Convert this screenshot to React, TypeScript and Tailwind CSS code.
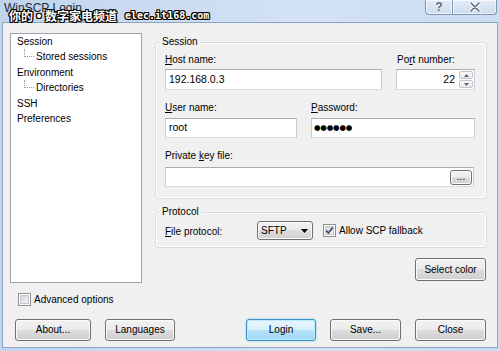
import React from "react";

const F = "font-['Liberation_Sans',Arial,sans-serif]";

const btn =
  "flex items-center justify-center rounded-[3px] border border-[#707070] bg-[linear-gradient(#f2f2f2_0%,#ebebeb_49%,#dddddd_50%,#cfcfcf_100%)] shadow-[inset_0_0_0_1px_#fbfbfb] text-[10px] leading-[12px] text-black";

const input =
  "border border-[#abadb3] border-l-[#c9cbd1] border-r-[#c9cbd1] border-b-[#d7dbe0] bg-white";

function U({ children }: { children: React.ReactNode }) {
  return <span className="underline underline-offset-[1px]">{children}</span>;
}

function Group({
  label,
  className,
  children,
}: {
  label: string;
  className?: string;
  children: React.ReactNode;
}) {
  return (
    <div
      className={
        "relative rounded-[3px] border border-[#d5dfe5] shadow-[inset_0_0_0_1px_#ffffff] " +
        (className ?? "")
      }
    >
      <span className="absolute -top-[7px] left-[4px] bg-[#f0f0f0] px-[2px] leading-[12px]">
        {label}
      </span>
      {children}
    </div>
  );
}

function Check({ checked }: { checked?: boolean }) {
  return (
    <span className="flex h-[13px] w-[13px] shrink-0 items-center justify-center border border-[#8e8f8f] bg-white">
      <span className="flex h-[9px] w-[9px] items-center justify-center border border-[#c4c7cc] bg-[linear-gradient(135deg,#d2d5d9,#f4f4f4)]">
        {checked && (
          <svg width="9" height="9" viewBox="0 0 9 9" className="overflow-visible">
            <path
              d="M1.2 4.6 L3.4 7 L7.8 1.4"
              fill="none"
              stroke="#3a4f7a"
              strokeWidth="1.7"
              strokeLinejoin="round"
            />
          </svg>
        )}
      </span>
    </span>
  );
}

function TreeChild({ label }: { label: string }) {
  return (
    <div className="flex h-[15.4px]">
      <span className="ml-[7px] h-[8px] w-[10px] border-b border-l border-dotted border-[#9a9a9a]" />
      <span className="ml-[2px]">{label}</span>
    </div>
  );
}

const outline =
  "[text-shadow:1px_0_0_#000,-1px_0_0_#000,0_1px_0_#000,0_-1px_0_#000,1px_1px_0_#000,-1px_-1px_0_#000,1px_-1px_0_#000,-1px_1px_0_#000]";

export default function App() {
  return (
    <div
      className={`${F} relative h-[351px] w-[500px] overflow-hidden bg-[linear-gradient(90deg,#c0d5ed,#d3e2f4_60%,#cbdcf0)] text-[10px] text-black`}
    >
      {/* Title bar */}
      <div className="flex h-[22px] items-start justify-between">
        <span className="pl-[4px] pt-[1px] text-[12px] leading-[14px] text-[#1e2a3a]">
          WinSCP Login
        </span>
        <div className="mr-[3px] flex h-[15px]">
          <div className="flex w-[27px] items-center justify-center rounded-bl-[4px] border border-t-0 border-r-0 border-[#8196b4] bg-[linear-gradient(#e4edf8,#cddcee)] shadow-[inset_0_0_0_1px_rgba(255,255,255,0.6)]">
            <span className="text-[12px] font-bold leading-[12px] text-[#55657a] [text-shadow:0_0_1px_#fff,0_0_1px_#fff]">
              ?
            </span>
          </div>
          <div className="flex w-[45px] items-center justify-center rounded-br-[4px] border border-t-0 border-[#8196b4] bg-[linear-gradient(#e4edf8,#cddcee)] shadow-[inset_0_0_0_1px_rgba(255,255,255,0.6)]">
            <svg width="12" height="10" viewBox="0 0 12 10">
              <path d="M2 1 L10 9 M10 1 L2 9" stroke="#ffffff" strokeWidth="3.4" strokeLinecap="round" />
              <path d="M2 1 L10 9 M10 1 L2 9" stroke="#5c6b80" strokeWidth="1.6" strokeLinecap="round" />
            </svg>
          </div>
        </div>
      </div>

      {/* Watermark overlay */}
      <div className={`absolute left-[9px] top-[9px] flex items-center whitespace-nowrap text-white ${outline}`}>
        <span className="inline-block w-[24px] overflow-visible font-['Noto_Sans_CJK_SC',sans-serif] text-[12px] font-bold leading-[14px]">
          你的
        </span>
        <span className="inline-block w-[12px] text-center font-['Liberation_Sans',sans-serif] text-[14px] font-bold leading-[14px]">
          •
        </span>
        <span className="inline-block w-[80px] font-['Noto_Sans_CJK_SC',sans-serif] text-[12px] font-bold leading-[14px]">
          数字家电频道
        </span>
        <span className="inline-block font-['DejaVu_Sans_Mono',monospace] text-[10px] font-bold leading-[14px]">
          elec.it168.com
        </span>
      </div>

      {/* Client area */}
      <div className="ml-[2px] flex h-[326px] w-[496px] flex-col border border-[#8ea3bf] bg-[#f0f0f0]">
        <div className="flex pl-[7px] pt-[10px]">
          {/* Left column */}
          <div className="flex w-[132px] flex-col">
            <div className="h-[250px] border border-[#9ea2aa] bg-white pl-[6px] leading-[15.4px]">
              <div>Session</div>
              <TreeChild label="Stored sessions" />
              <div>Environment</div>
              <TreeChild label="Directories" />
              <div>SSH</div>
              <div>Preferences</div>
            </div>
            <div className="ml-[8px] mt-[10px] flex items-center gap-[3px] leading-[12px]">
              <Check />
              <span>Advanced options</span>
            </div>
          </div>

          {/* Right column */}
          <div className="ml-[13px] mt-[9px] flex w-[332px] flex-col">
            <Group label="Session" className="pb-[11px] pl-[9px] pt-[11px]">
              <div className="flex gap-[14px]">
                <div className="w-[217px]">
                  <div className="mb-[3px] leading-[12px]">
                    <U>H</U>ost name:
                  </div>
                  <div className={`${input} flex h-[21px] items-center pl-[3px] text-[10.5px]`}>
                    192.168.0.3
                  </div>
                </div>
                <div className="w-[79px]">
                  <div className="mb-[3px] pl-[1px] leading-[12px]">
                    Po<U>r</U>t number:
                  </div>
                  <div className={`${input} flex h-[21px] items-center justify-end pr-[1px] text-[10.5px]`}>
                    <span className="mr-[4px]">22</span>
                    <div className="flex h-[17px] w-[14px] flex-col gap-[1px]">
                      <div className="flex flex-1 items-center justify-center rounded-[2px] border border-[#c2c5ca] bg-[linear-gradient(#fafafa,#e8e8e8)]">
                        <svg width="5" height="3" viewBox="0 0 5 3">
                          <path d="M0 3 L2.5 0 L5 3 Z" fill="#5d6673" />
                        </svg>
                      </div>
                      <div className="flex flex-1 items-center justify-center rounded-[2px] border border-[#c2c5ca] bg-[linear-gradient(#fafafa,#e8e8e8)]">
                        <svg width="5" height="3" viewBox="0 0 5 3">
                          <path d="M0 0 L5 0 L2.5 3 Z" fill="#5d6673" />
                        </svg>
                      </div>
                    </div>
                  </div>
                </div>
              </div>

              <div className="mt-[12px] flex gap-[14px]">
                <div className="w-[132px]">
                  <div className="mb-[4px] leading-[12px]">
                    <U>U</U>ser name:
                  </div>
                  <div className={`${input} flex h-[20px] items-center pl-[3px] text-[10.5px]`}>
                    root
                  </div>
                </div>
                <div className="w-[164px]">
                  <div className="mb-[4px] leading-[12px]">
                    <U>P</U>assword:
                  </div>
                  <div className={`${input} flex h-[20px] items-center pl-[2px]`}>
                    <span className="font-['DejaVu_Sans',sans-serif] text-[7.5px] leading-[10px] tracking-[-0.2px]">
                      ●●●●●●
                    </span>
                  </div>
                </div>
              </div>

              <div className="mt-[12px] w-[309px]">
                <div className="mb-[5px] leading-[12px]">
                  Private <U>k</U>ey file:
                </div>
                <div className={`${input} flex h-[20px] items-center justify-end pr-[1px]`}>
                  <div className={`${btn} h-[15px] w-[22px] !leading-[8px]`}>...</div>
                </div>
              </div>
            </Group>

            <Group label="Protocol" className="mt-[13px] pb-[7px] pl-[9px] pt-[8px]">
              <div className="flex h-[19px] items-center">
                <span className="w-[92px] pt-[2px] leading-[12px]">
                  <U>F</U>ile protocol:
                </span>
                <div className={`${btn} h-[19px] w-[56px] !justify-between pl-[3px] pr-[4px]`}>
                  <span>SFTP</span>
                  <svg width="7" height="4" viewBox="0 0 7 4">
                    <path d="M0 0 L7 0 L3.5 4 Z" fill="#000" />
                  </svg>
                </div>
                <span className="ml-[10px]">
                  <Check checked />
                </span>
                <span className="ml-[3px] leading-[12px]">Allow SCP fallback</span>
              </div>
            </Group>

            <div className="mr-[1px] mt-[10px] flex justify-end">
              <div className={`${btn} h-[23px] w-[71px]`}>Select color</div>
            </div>
          </div>
        </div>

        {/* Bottom buttons */}
        <div className="mt-auto flex pb-[6px] pl-[12px] pr-[11px]">
          <div className={`${btn} h-[22px] w-[76px]`}>About...</div>
          <div className={`${btn} ml-[14px] h-[22px] w-[70px]`}>Languages</div>
          <div className="ml-auto flex gap-[14px]">
            <div className="flex h-[22px] w-[70px] items-center justify-center rounded-[3px] border border-[#3c8fc4] bg-[linear-gradient(#eaf7fe_0%,#d5effc_49%,#b8e3fa_50%,#a0d6f3_100%)] shadow-[inset_0_0_0_1px_#b8ecff,0_0_2px_#5fcdf6] leading-[12px]">
              Login
            </div>
            <div className={`${btn} h-[22px] w-[71px]`}>Save...</div>
            <div className={`${btn} h-[22px] w-[71px]`}>Close</div>
          </div>
        </div>
      </div>
    </div>
  );
}
